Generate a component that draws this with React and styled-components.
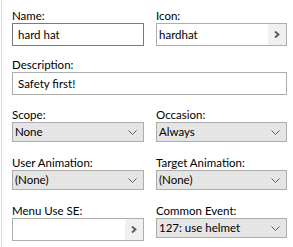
import styled, { createGlobalStyle } from 'styled-components';

const GlobalStyle = createGlobalStyle`
  body {
    margin: 0;
    background: #ffffff;
    font-family: Lato, "Noto Sans", sans-serif;
    font-size: 11.5px;
    color: #000;
  }
`;

const Page = styled.div`
  width: 293px;
  height: 247px;
  box-sizing: border-box;
  border-left: 1px solid #dcdcdc;
  margin-left: 1px;
  padding: 8px 6px 0 10px;

  display: grid;
  grid-template-columns: 132px 131px;
  grid-template-rows: 49px 50px 48px 48px auto;
  column-gap: 12px;
  align-content: start;
`;

const Field = styled.div`
  grid-column: ${p => (p.$wide ? '1 / -1' : 'auto')};
  display: flex;
  flex-direction: column;
`;

const Label = styled.label`
  height: 15px;
  line-height: 15px;
  white-space: nowrap;
`;

const TextBox = styled.div`
  height: 23px;
  box-sizing: border-box;
  border: 1px solid ${p => (p.$focused ? '#7a7a7a' : '#adadad')};
  background: #fff;
  padding-left: ${p => p.$pad || 4}px;
  display: flex;
  align-items: center;
  line-height: 21px;
`;

const PickBox = styled.div`
  height: 23px;
  box-sizing: border-box;
  border: 1px solid #adadad;
  background: #fff;
  display: flex;
  align-items: stretch;
`;

const PickText = styled.div`
  flex: 1;
  padding-left: 2px;
  line-height: 21px;
`;

const PickButton = styled.div`
  width: 18px;
  background: #f0f0f0;
  display: flex;
  align-items: center;
  justify-content: center;
`;

const Select = styled.div`
  height: 20px;
  box-sizing: border-box;
  border: 1px solid #adadad;
  background: #e5e5e5;
  padding: 0 6px 0 2px;
  display: flex;
  align-items: center;
  justify-content: space-between;
  line-height: 18px;
`;

const Chevron = () => (
  <svg width="6" height="7" viewBox="0 0 6 7">
    <path d="M1 0.5 L4.5 3.5 L1 6.5" fill="none" stroke="#555" strokeWidth="1.8" />
  </svg>
);

const DownArrow = () => (
  <svg width="9" height="5" viewBox="0 0 9 5">
    <path d="M0.5 0.5 L4.5 4.5 L8.5 0.5" fill="none" stroke="#606060" strokeWidth="1" />
  </svg>
);

function Combo({ value }) {
  return (
    <Select>
      <span>{value}</span>
      <DownArrow />
    </Select>
  );
}

function Picker({ value }) {
  return (
    <PickBox>
      <PickText>{value}</PickText>
      <PickButton>
        <Chevron />
      </PickButton>
    </PickBox>
  );
}

export default function App() {
  return (
    <>
      <GlobalStyle />
      <Page>
        <Field>
          <Label>Name:</Label>
          <TextBox $focused $pad={5}>hard hat</TextBox>
        </Field>
        <Field>
          <Label>Icon:</Label>
          <Picker value="hardhat" />
        </Field>
        <Field $wide>
          <Label>Description:</Label>
          <TextBox $pad={5}>Safety first!</TextBox>
        </Field>
        <Field>
          <Label>Scope:</Label>
          <Combo value="None" />
        </Field>
        <Field>
          <Label>Occasion:</Label>
          <Combo value="Always" />
        </Field>
        <Field>
          <Label>User Animation:</Label>
          <Combo value="(None)" />
        </Field>
        <Field>
          <Label>Target Animation:</Label>
          <Combo value="(None)" />
        </Field>
        <Field>
          <Label>Menu Use SE:</Label>
          <Picker value="" />
        </Field>
        <Field>
          <Label>Common Event:</Label>
          <Combo value="127: use helmet" />
        </Field>
      </Page>
    </>
  );
}
